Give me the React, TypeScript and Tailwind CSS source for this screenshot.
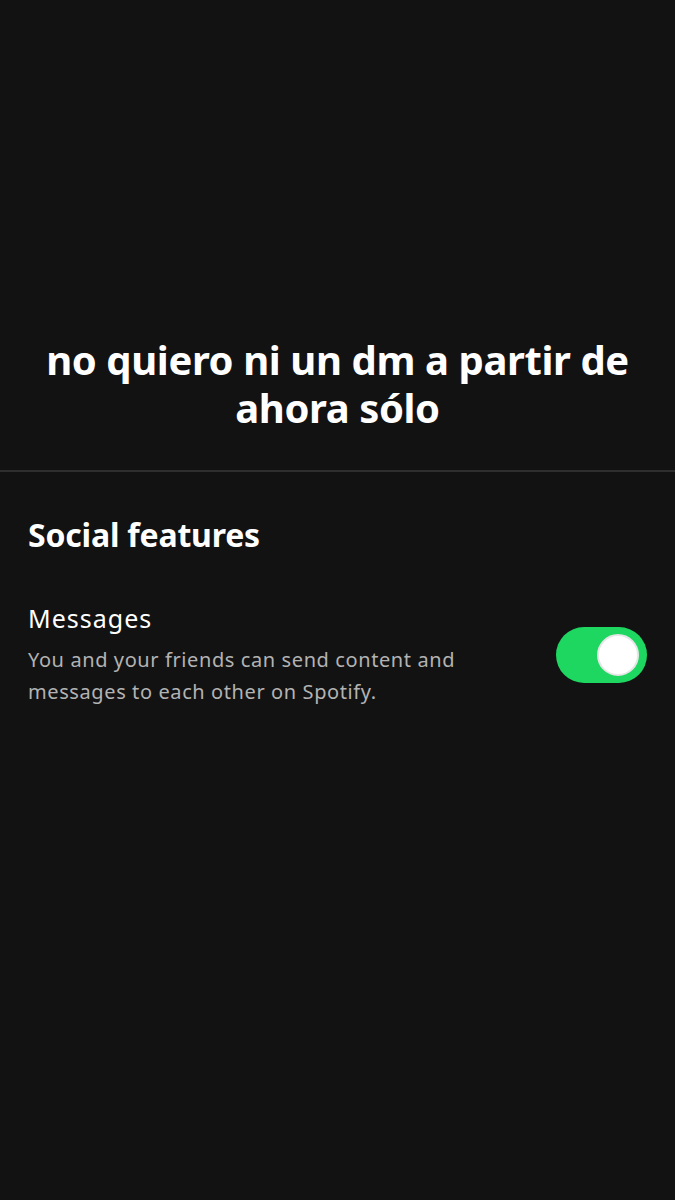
import React from 'react';

export default function App() {
  return (
    <main
      className="min-h-[1200px] w-full bg-[#121212] text-white"
      style={{ fontFamily: '"Noto Sans", "Open Sans", sans-serif' }}
    >
      {/* Header text */}
      <div className="flex h-[470px] flex-col justify-end pb-[38px]">
        <h1 className="px-4 text-center text-[40px] font-bold leading-[48px] tracking-[-0.4px]">
          no quiero ni un dm a partir de ahora sólo
        </h1>
      </div>
      <div className="h-[2px] w-full bg-[#2e2e2e]" />

      {/* Social features */}
      <section className="px-[28px] pt-[41px]">
        <h2 className="text-[32px] font-bold leading-[44px] tracking-[-0.2px]">Social features</h2>
        <div className="mt-[44px] flex items-center justify-between">
          <div className="max-w-[470px]">
            <p className="text-[25px] leading-[34px] tracking-[1px]">Messages</p>
            <p className="mt-[9px] text-[20px] leading-[32px] tracking-[0.6px] text-[#b3b3b3]">
              You and your friends can send content and messages to each other on Spotify.
            </p>
          </div>
          <div className="flex h-[56px] w-[91px] shrink-0 items-center justify-end rounded-full bg-[#1ed760] pr-[8px]">
            <div className="h-[42px] w-[42px] rounded-full border-2 border-[#e6e6e6] bg-white" />
          </div>
        </div>
      </section>
    </main>
  );
}
